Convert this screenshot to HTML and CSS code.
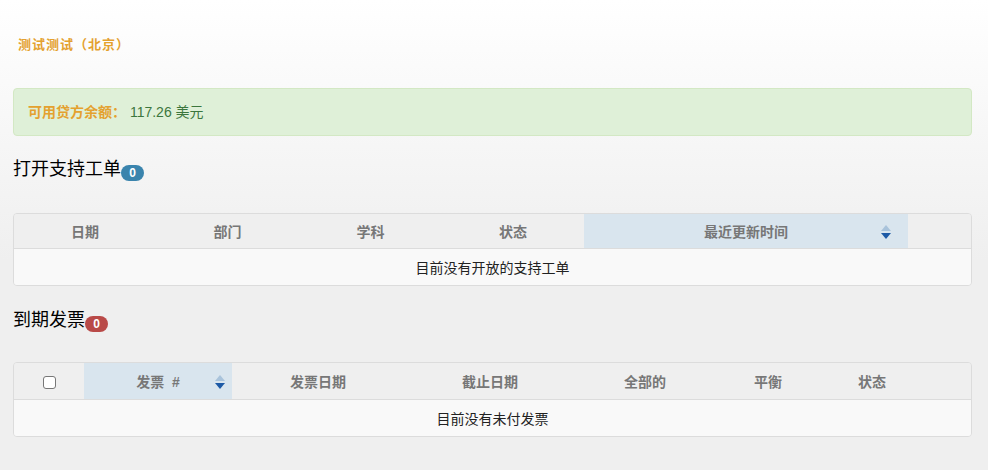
FILE: index.html
```html
<!DOCTYPE html>
<html lang="zh-CN">
<head>
    <meta charset="UTF-8">
    <title>客户中心</title>
    <link rel="stylesheet" href="styles.css">
</head>
<body>
    <div class="page">
        <p class="client-name">测试测试（北京）</p>

        <div class="alert">
            <span class="alert-label">可用贷方余额：</span>
            <span class="alert-value">117.26 美元</span>
        </div>

        <h3 class="section-title">打开支持工单<span class="badge badge-info">0</span></h3>
        <div class="table-wrap">
            <table class="data-table tickets">
                <colgroup>
                    <col style="width: 142px">
                    <col style="width: 143px">
                    <col style="width: 143px">
                    <col style="width: 142px">
                    <col style="width: 324px">
                    <col>
                </colgroup>
                <thead>
                    <tr>
                        <th>日期</th>
                        <th>部门</th>
                        <th>学科</th>
                        <th>状态</th>
                        <th class="sorted">最近更新时间
                            <svg class="sort-icon" width="10" height="16" viewBox="0 0 10 16">
                                <polygon points="0,7 5,1 10,7" fill="#a9c3db"/>
                                <polygon points="0,9 10,9 5,15" fill="#1d5aa6"/>
                            </svg>
                        </th>
                        <th></th>
                    </tr>
                </thead>
                <tbody>
                    <tr><td colspan="6">目前没有开放的支持工单</td></tr>
                </tbody>
            </table>
        </div>

        <h3 class="section-title second">到期发票<span class="badge badge-danger">0</span></h3>
        <div class="table-wrap">
            <table class="data-table invoices">
                <colgroup>
                    <col style="width: 70px">
                    <col style="width: 148px">
                    <col style="width: 172px">
                    <col style="width: 172px">
                    <col style="width: 138px">
                    <col style="width: 108px">
                    <col style="width: 100px">
                    <col>
                </colgroup>
                <thead>
                    <tr>
                        <th><span class="check-box"></span></th>
                        <th class="sorted">发票 &nbsp;#
                            <svg class="sort-icon" width="10" height="16" viewBox="0 0 10 16">
                                <polygon points="0,7 5,1 10,7" fill="#a9c3db"/>
                                <polygon points="0,9 10,9 5,15" fill="#1d5aa6"/>
                            </svg>
                        </th>
                        <th>发票日期</th>
                        <th>截止日期</th>
                        <th>全部的</th>
                        <th>平衡</th>
                        <th>状态</th>
                        <th></th>
                    </tr>
                </thead>
                <tbody>
                    <tr><td colspan="8">目前没有未付发票</td></tr>
                </tbody>
            </table>
        </div>
    </div>
</body>
</html>
```

FILE: styles.css
```css
html {
    background: #efefef;
}
body {
    margin: 0;
    min-height: 470px;
    background: linear-gradient(to bottom, #ffffff 0, #efefef 260px);
    font-family: "Liberation Sans", "Noto Sans CJK SC", sans-serif;
    font-size: 14px;
    color: #333;
}

.page {
    padding: 36px 16px 0 13px;
}

.client-name {
    margin: 0 0 34px 5px;
    line-height: 18px;
    font-size: 13px;
    font-weight: bold;
    letter-spacing: 1px;
    color: #e4a12f;
}

.alert {
    height: 46px;
    line-height: 46px;
    padding: 0 14px;
    background: #dff0d8;
    border: 1px solid #d3e8c4;
    border-radius: 4px;
}
.alert-label {
    font-weight: bold;
    color: #e4a12f;
}
.alert-value {
    color: #3c763d;
}

.section-title {
    margin: 21px 0 32px;
    height: 24px;
    line-height: 24px;
    font-size: 18px;
    font-weight: normal;
    color: #000;
}
.section-title.second {
    margin-top: 22px;
    margin-bottom: 30px;
}

.badge {
    display: inline-block;
    vertical-align: -2px;
    min-width: 9px;
    padding: 0 7px;
    height: 16px;
    line-height: 16px;
    border-radius: 8px;
    font-size: 12px;
    font-weight: bold;
    color: #fff;
    text-align: center;
}
.badge-info {
    background: #3a84ad;
}
.badge-danger {
    background: #b94a48;
}

.table-wrap {
    border: 1px solid #dcdcdc;
    border-radius: 4px;
    overflow: hidden;
}
.data-table {
    width: 100%;
    border-collapse: collapse;
    table-layout: fixed;
}
.data-table th {
    height: 34px;
    padding: 0;
    background: #efefef;
    border-bottom: 1px solid #dcdcdc;
    font-weight: bold;
    color: #777;
    text-align: center;
    position: relative;
}
.invoices th {
    height: 36px;
}
.data-table th.sorted {
    background: #d9e5ee;
}
.sort-icon {
    position: absolute;
    right: 17px;
    top: 50%;
    margin-top: -7px;
}
.invoices .sort-icon {
    right: 7px;
}
.data-table td {
    height: 36px;
    padding: 0;
    background: #f9f9f9;
    text-align: center;
    color: #222;
}

.check-box {
    display: inline-block;
    vertical-align: middle;
    width: 11px;
    height: 11px;
    border: 1px solid #777;
    border-radius: 3px;
    background: #fff;
}
```
